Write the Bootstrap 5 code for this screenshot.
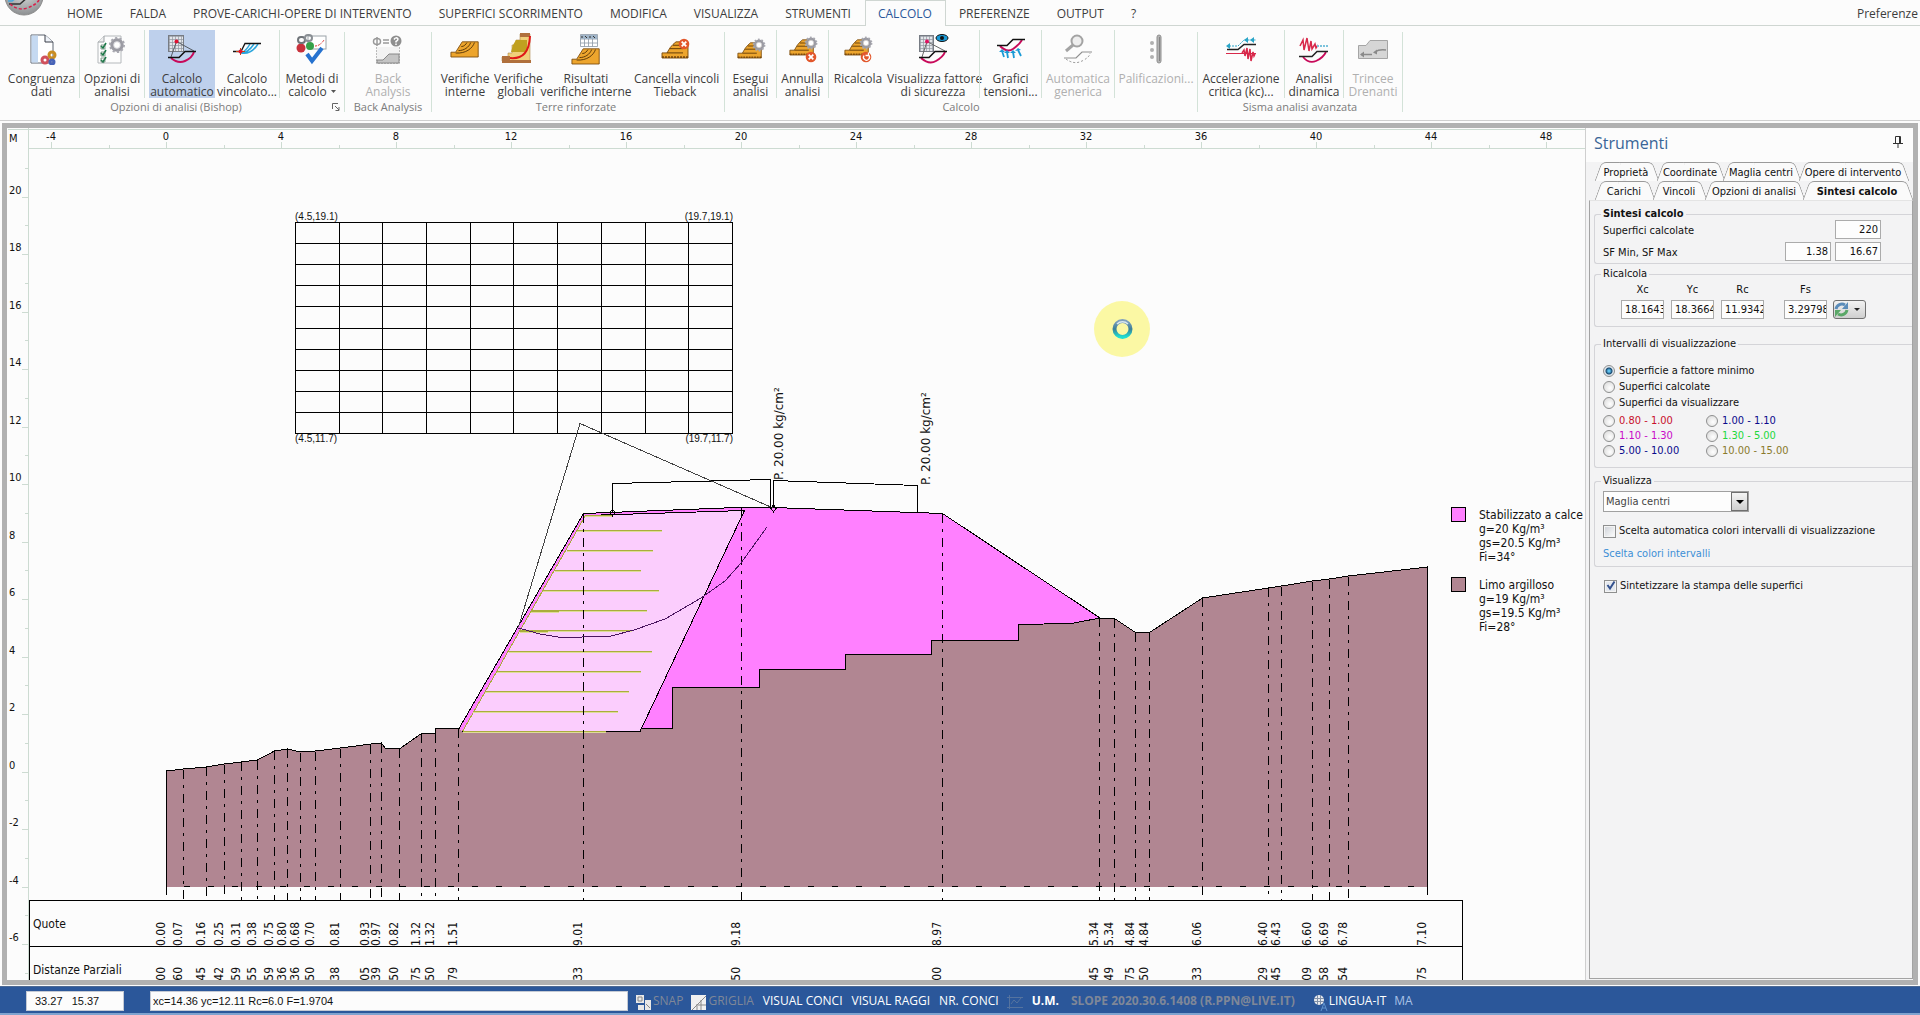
<!DOCTYPE html>
<html lang="it">
<head>
<meta charset="utf-8">
<meta name="viewport" content="width=device-width, initial-scale=1">
<title>Slope - Calcolo</title>
<link rel="stylesheet" href="https://cdn.jsdelivr.net/npm/bootstrap@5.3.0/dist/css/bootstrap.min.css">
<style>
:root{--ui:"Open Sans","Noto Sans",sans-serif;--form:"DejaVu Sans Condensed","DejaVu Sans",sans-serif}
body{font-family:var(--ui);font-size:12px;line-height:14px;color:#3c3c3c;background:#fcfcfc}
button{font-family:inherit}
/* menu tabs */
.menubar{height:26px;padding-left:54px;border-bottom:1px solid #cfd6d2}
.menutab{height:26px;padding:0 13px 0 12px;border:1px solid transparent;border-bottom:0;background:none;color:#3c3c3c;font-size:12px;line-height:24px;white-space:nowrap}
.menutab.current{background:#fcfcfc;border-color:#cfd6d2;color:#2b579a}
.menutab.corner{padding:0 1px}
.logo-orb{left:4px;top:0}
/* ribbon */
.ribbon{height:95px;border-bottom:1px solid #cfcfcf}
.rgroup{border-right:1px solid #d3e2d8;height:80px;margin-top:6px}
.rtools{height:68px;margin-top:-2px}
.rbtn{border:0;background:none;color:#3c3c3c;padding:2px 0 0;font-size:12px;line-height:13px;white-space:nowrap}
.rbtn:disabled{color:#b0b0b0}
.rbtn.on{background:#bed0ec}
.rbtn svg{display:block;width:32px;height:32px;margin:0 auto 7px}
.rbtn svg.caret{display:inline-block;width:5px;height:8px;margin:0 0 0 4px;vertical-align:middle}
.rsep{width:1px;background:#d3e2d8}
.rlabel{font-size:11px;line-height:12px;color:#7b7b7b;padding-top:3px}
.w44{width:44px}.w51{width:51px}.w58{width:58px}.w61{width:61px}.w64{width:64px}.w66{width:66px}.w72{width:72px}.w75{width:75px}.w82{width:82px}.w86{width:86px}.w92{width:92px}.w96{width:96px}
/* work area */
.workframe{border:5px solid #b1b1b1;margin:2px 2px 0 2px;background:#fcfcfc}
.plot{font-family:var(--form);font-size:12px}
.plot text{fill:#111}
.plot .rule{font-size:11px}
.plot .load{font-family:"DejaVu Sans",sans-serif}
.plot .tiny{font-size:10px;font-family:"Liberation Sans",sans-serif}
.tick{stroke:#cddbd2;stroke-width:1;shape-rendering:crispEdges}
.crisp{shape-rendering:crispEdges}
.ink{stroke:#000;stroke-width:1;fill:none;shape-rendering:crispEdges}
.ink.radius{stroke:#444}
.ink.slip{stroke:#4a1560}
/* side panel */
.side{width:328px;border-left:1px solid #cfcfcf;font-family:var(--form);font-size:11px;line-height:14px;color:#111}
.side-title{font-family:var(--ui);font-size:16px;line-height:30px;height:34px;color:#3a6597;padding:0 10px 0 8px}
.side-body{background:#f3f3f4}
.tabrow{height:19px;padding-left:9px}
.ptab{position:relative;flex:none;border:0;background:none;padding:2px 0 0;height:19px;font-size:11px;line-height:15px;color:#111;white-space:nowrap;z-index:0}
.ptab::before,.ptab::after{content:"";position:absolute;z-index:-1;top:0;bottom:0;border-top:1px solid #9a9a9a;background:#fafafa}
.ptab::before{left:3px;right:50%;border-left:1px solid #9a9a9a;border-radius:5px 0 0 0;transform:skewX(-20deg)}
.ptab::after{right:1px;left:45%;border-right:1px solid #9a9a9a;border-radius:0 5px 0 0;transform:skewX(20deg)}
.ptab.current{font-weight:700}
.pw52{width:52px}.pw58{width:58px}.pw62{width:62px}.pw66{width:66px}.pw76{width:76px}.pw98{width:98px}.pw108{width:108px}
.side-page{border:1px solid #a3a3a3;border-top-color:#e4e4e4;margin:0 0 1px 3px;padding:7px 0 0 4px}
.fset{border:1px solid #d4d4d8;border-right:0;border-radius:3px 0 0 3px;position:relative;min-width:0;padding:0 31px 0 8px}
.fset legend{float:none;width:auto;font-size:11px;line-height:14px;margin:0 0 0 -2px;padding:0 2px}
.summary{padding-bottom:2px}
.summary legend{line-height:12px}
.summary-gap{margin-top:3px}
.calc{margin-top:3px;padding-bottom:7px}
.calc legend{margin-bottom:2px}
.calc label{text-align:center;margin-left:7px}
.calc label:first-child{margin-left:18px}
.calc label:last-of-type{margin-left:20px}
.calc .fld{margin-top:3px;padding-right:0}
.refresh{width:33px;height:19px;margin-left:6px;border:1px solid #707070;border-radius:3px;background:linear-gradient(#f2f2f2,#cfcfcf);padding:0}
.fld{height:19px;border:1px solid #ababab;background:#fdfdfd;font-size:11px;line-height:15px;padding:1px 2px 1px 3px;color:#111;border-radius:0}
.fw46{width:46px}.fw43{width:43px}
.radios{margin-top:10px;padding-bottom:9px}
.radios legend{margin-bottom:12px}
.radios label{height:16px}
.pairs{grid-template-columns:103px 1fr;margin-top:2px}
.pairs label{height:15px;white-space:nowrap}
.view{margin-top:6px;padding-bottom:5px}
.view legend{margin-bottom:3px}
.auto-col{margin-top:12px;margin-bottom:9px}
.print{margin:12px 0 0 10px}
.opt{appearance:none;width:12px;height:12px;border:1px solid #8e8f8f;border-radius:50%;background:radial-gradient(circle at 60% 60%,#fff,#d5d5d5);margin:0 4px 0 0;flex:none}
.opt:checked{background:radial-gradient(circle,#5fc1ee 0 1px,#17486f 3px,#dfe6ec 4px)}
.tick-box{appearance:none;width:13px;height:13px;border:1px solid #8e8f8f;background:linear-gradient(135deg,#ccd0d6,#fff);box-shadow:inset 0 0 0 1px #f4f4f4;margin:0 3px 0 0;flex:none}
.tick-box:checked{background:#e4e8ee}
.print svg{left:2px;top:1px;pointer-events:none}
.pick{appearance:none;width:146px;height:21px;border:1px solid #a0a0a0;border-radius:0;background:#fdfdfd;color:#444;font-size:11px;padding:0 20px 0 2px}
.pick-arrow{right:1px;top:1px;width:17px;height:19px;border:1px solid #6f6f6f;background:linear-gradient(#f4f4f4,#cfcfcf);pointer-events:none}
.pick-arrow::after{content:"";position:absolute;left:4px;top:7px;border:4px solid transparent;border-top-color:#000;border-bottom:0}
.c-red{color:#c8102c}.c-mag{color:#c80ac8}.c-navy{color:#0a0a8c}.c-lime{color:#22d83c}.c-olive{color:#8a7a2c}.c-link{color:#3d8fd6}
/* status */
.statusbar{height:27px;margin-top:1px;background:#2b579a;border-top:1px solid #4d6a94;color:#fff;font-size:12px;line-height:20px}
.statusbar input{height:20px;border:1px solid #c4cad4;background:#fcfcfc;color:#111;font:11px/18px "Liberation Sans",sans-serif}
.statusbar button{border:0;background:none;color:#fff;padding:0;font-size:12px;line-height:20px;white-space:nowrap}
.statusbar .off{color:#7f8798}
.statusbar .off svg{margin-right:2px}
.statusbar .st-item{margin-left:9px}
.statusbar .st-lang{margin-left:18px}
.st-kbd{color:#a9c2e6}
.st-pos{width:98px;margin-left:26px;padding:0 8px}
.st-info{width:478px;margin-left:26px;padding:0 2px}
.under{height:2px;background:#7fa3cf}
</style>
<script src="https://cdn.jsdelivr.net/npm/bootstrap@5.3.0/dist/js/bootstrap.bundle.min.js"></script>
</head>
<body class="vh-100 d-flex flex-column overflow-hidden">

<svg width="0" height="0" class="position-absolute" aria-hidden="true">
 <defs>
  <pattern id="mesh" width="3" height="3" patternUnits="userSpaceOnUse"><rect width="3" height="3" fill="#e3e6ea"/><path d="M0 .5H3M.5 0V3" stroke="#9298a0" stroke-width=".7"/></pattern>
  <g id="gear"><circle r="5" fill="none" stroke="#9b9ba3" stroke-width="3.5"/><circle r="7" fill="none" stroke="#a8a8b0" stroke-width="2" stroke-dasharray="2.2 2.2"/><circle r="3.4" fill="#fff" stroke="#c9c9cf" stroke-width=".8"/></g>
  <g id="slab"><path d="M1 14H6L13 1H30V20H1Z" fill="#eda52d" stroke="#7a4a0c" stroke-width="1"/><path d="M9 12C15 12 20 8 22 2M6 15C17 16 24 9 26 2M12 7C15 7 17 4 18 2" fill="none" stroke="#4a2c05" stroke-width="1"/></g>
  <g id="stack"><path d="M1 14H6L9 8 12 4 15 1H27V20H1Z" fill="#eda52d" stroke="#7a4a0c"/><path d="M6 14H22M9 9H22L25 4M12 5H24" fill="none" stroke="#5a3606"/><path d="M1 19H27" stroke="#7a4a0c" stroke-width="2" stroke-dasharray="2 1"/></g>
  <g id="xdot"><circle r="5.3" fill="#e2572b"/><path d="M-2.3-2.3 2.3 2.3M2.3-2.3-2.3 2.3" stroke="#fff" stroke-width="1.8"/></g>
 </defs>
 <symbol id="i-congr" viewBox="0 0 32 32"><path d="M5 2H19L27 9V30H5Z" fill="#fff" stroke="#5d6470"/><path d="M5.500 2.500H12V29.500H5.500Z" fill="#c5d9f1"/><path d="M19 2V9H27" fill="#eef2f8" stroke="#3a3f48"/><circle cx="19" cy="27" r="3" fill="none" stroke="#d0505c" stroke-width="3"/><circle cx="26" cy="22" r="3" fill="none" stroke="#c98d22" stroke-width="3"/><circle cx="26" cy="29" r="2" fill="none" stroke="#4763b8" stroke-width="3"/></symbol>
 <symbol id="i-opz" viewBox="0 0 32 32"><path d="M8 3H25V30H2V9Z" fill="#fdfdfd" stroke="#b4b8bb"/><path d="M2 9H8V3" fill="#eee" stroke="#9ba0a4"/><path d="M5 13l2 2 3-5M5 20l2 2 3-5M5 27l2 2 3-5" fill="none" stroke="#157a45" stroke-width="1.600"/><path d="M5 12h4v4h-4zM5 19h4v4h-4zM5 25h4v4h-4z" fill="none" stroke="#557a66" stroke-width=".7"/><use href="#gear" x="21" y="12"/></symbol>
 <symbol id="i-auto" viewBox="0 0 32 32"><rect x="2.500" y="2.500" width="15" height="16" fill="url(#mesh)" stroke="#777c84"/><path d="M10.500 8.500 5 24M10.500 8.500 28 18" stroke="#555b63"/><circle cx="10.500" cy="8.500" r="2" fill="#e01030"/><path d="M5 25Q12 31 19 28T28 19" fill="none" stroke="#c80a5a" stroke-width="2"/><path d="M2 24.500H13L19 18.500H30" fill="none" stroke="#111" stroke-width="1.500"/></symbol>
 <symbol id="i-vinc" viewBox="0 0 32 32"><path d="M10 20Q20 22 27 11M10 20Q17 20 23 11M10 20Q15 18 19 11" fill="none" stroke="#2aa5dc" stroke-width="1.500"/><path d="M2 18.500H10L14 10.500H30" fill="none" stroke="#111" stroke-width="1.300"/><path d="M9.500 15V22M5 18.500H14" stroke="#c41"/><circle cx="9.500" cy="18.500" r="2" fill="#e01030"/></symbol>
 <symbol id="i-met" viewBox="0 0 32 32"><rect x="12" y="3" width="18" height="13" fill="#fff" stroke="#9aa2a8"/><path d="M19 13Q24 13 28 7" fill="none" stroke="#d33" stroke-dasharray="2 1"/><circle cx="5" cy="15" r="4.500" fill="#c8323c"/><circle cx="14" cy="13" r="4" fill="#36a048"/><rect x="2" y="4" width="7" height="6" rx="3" fill="none" stroke="#6f7479" stroke-width="2"/><rect x="9" y="2" width="7" height="6" rx="3" fill="none" stroke="#8a8f94" stroke-width="2"/><path d="M11 21l5 7L26 15" fill="none" stroke="#2672cf" stroke-width="4"/></symbol>
 <symbol id="i-back" viewBox="0 0 32 32"><path d="M4.500 14V30.500H27.500V14" fill="#f3f3f3" stroke="#bbb" stroke-dasharray="2 1"/><path d="M5 27H11L17 21H27V30H5Z" fill="#c5c5c5" stroke="#888"/><ellipse cx="5" cy="8.500" rx="3.500" ry="3" fill="none" stroke="#999" stroke-width="1.500"/><path d="M5 4V13M11 7H17M11 10H17" stroke="#999" stroke-width="1.500"/><circle cx="24" cy="8" r="5.500" fill="#8f8f8f"/><path d="M22 6.500Q24 3.500 26 6 26 7.500 24 8.500V9.500M24 10.500V12" fill="none" stroke="#fff" stroke-width="1.500"/></symbol>
 <symbol id="i-vint" viewBox="0 0 32 32"><g transform="translate(1 8) scale(.94 .8)"><use href="#slab"/></g></symbol>
 <symbol id="i-vglob" viewBox="0 0 32 32"><path d="M2 24H8V20H12V12H16V7H20V1H30V28H2Z" fill="#f0cf7a" stroke="#b08c50" stroke-width=".6"/><path d="M20 0H30V4H20ZM2 23H10V28H2ZM2 27H31V30H2Z" fill="#b0703c"/><path d="M16 7H27V19H11L13 12Z" fill="#c0a020"/><path d="M10 25Q29 27 30 3" fill="none" stroke="#e01818" stroke-width="2"/></symbol>
 <symbol id="i-ris" viewBox="0 0 32 32"><path d="M10.500 1.500H27.500V13.500H10.500ZM10.500 6H27.500M10.500 10H27.500M14.500 6V13.500M18.500 6V13.500M22.500 6V13.500" fill="#fff" stroke="#8a97a5" stroke-width=".8"/><path d="M11 2H27V6H11Z" fill="#9fb4c8"/><path d="M12 3v2M15 3l2 2M20 3v2M23 3l2 2" stroke="#333"/><g transform="translate(1 15) scale(.94 .8)"><use href="#slab"/></g></symbol>
 <symbol id="i-canc" viewBox="0 0 32 32"><g transform="translate(2 8) scale(1 .85)"><use href="#stack"/></g><use href="#xdot" x="25" y="11"/></symbol>
 <symbol id="i-eseg" viewBox="0 0 32 32"><g transform="translate(2 9) scale(.9 .8)"><use href="#stack"/></g><g transform="translate(24 12) scale(.8)"><use href="#gear"/></g></symbol>
 <symbol id="i-ann" viewBox="0 0 32 32"><g transform="translate(2 6) scale(.9 .8)"><use href="#stack"/></g><g transform="translate(24 10) scale(.8)"><use href="#gear"/></g><use href="#xdot" x="24" y="24"/></symbol>
 <symbol id="i-ric" viewBox="0 0 32 32"><g transform="translate(2 6) scale(.9 .8)"><use href="#stack"/></g><g transform="translate(24 10) scale(.8)"><use href="#gear"/></g><circle cx="24" cy="24" r="5.300" fill="#e2572b"/><path d="M26.500 22A3 3 0 1 1 22 22.500M26.500 19.500V22.500H23.500" fill="none" stroke="#fff" stroke-width="1.300"/></symbol>
 <symbol id="i-fatt" viewBox="0 0 32 32"><rect x="2.500" y="2.500" width="14" height="16" fill="url(#mesh)" stroke="#777c84"/><path d="M10 8.500 5 24M10 8.500 28 18" stroke="#666"/><circle cx="10" cy="8.500" r="2" fill="#e01060"/><path d="M4 25Q12 32 19 28T28 19" fill="none" stroke="#c80a5a" stroke-width="2"/><path d="M2 24.500H12L18 18.500H30" fill="none" stroke="#111" stroke-width="1.500"/><ellipse cx="25" cy="5" rx="6" ry="3.500" fill="#1a9ad6" stroke="#111"/><circle cx="25" cy="5" r="2" fill="#111"/></symbol>
 <symbol id="i-graf" viewBox="0 0 32 32"><path d="M5 13Q12 20 18 16T27 7" fill="none" stroke="#c80a5a" stroke-width="2"/><path d="M2 12.500H12L18 6.500H30" fill="none" stroke="#111" stroke-width="1.500"/><path d="M9 24 7 18M13 25 12 19M19 25 18 19M26 23 23 17" stroke="#1a9ad6" stroke-width="1.800"/><path d="M4 19l3-3 3 3zM9 20l3-3 3 3zM15 20l3-3 3 3zM20 18l3-3 3 2z" fill="#1a9ad6"/></symbol>
 <symbol id="i-autog" viewBox="0 0 32 32"><circle cx="15" cy="8" r="5.500" fill="#eee" stroke="#a3a3a3" stroke-width="2"/><path d="M11 12 4 18" stroke="#a3a3a3" stroke-width="3"/><path d="M2 25H14L20 19H30" fill="none" stroke="#8f8f8f" stroke-width="1.200"/><path d="M4 26Q12 32 20 28T28 20" fill="none" stroke="#8f8f8f" stroke-dasharray="2 2"/></symbol>
 <symbol id="i-pal" viewBox="0 0 32 32"><rect x="17" y="2" width="4" height="28" rx="2" fill="#b4b4b4" stroke="#909090"/><path d="M19.500 4V28" stroke="#858585"/><circle cx="12" cy="10" r="2" fill="#b0b0b0"/><circle cx="12" cy="17" r="2" fill="#b0b0b0"/><circle cx="12" cy="24" r="2" fill="#b0b0b0"/></symbol>
 <symbol id="i-acc" viewBox="0 0 32 32"><path d="M2 16.500H13L19 11.500H31" fill="none" stroke="#222" stroke-width="1.500"/><path d="M4 13H13L19 7H31" fill="none" stroke="#2aa5c8" stroke-dasharray="2 1"/><path d="M5 10v6l-4-3zM23 4v6l-4-3zM29 4v6l-4-3z" fill="#2aa5c8"/><path d="M1 20.500H31" stroke="#d8284a"/><path d="M17 20l2-3 1 6 2-8 1 11 2-10 1 12 2-9 1 4 1-2" fill="none" stroke="#d8284a" stroke-width="1.500"/></symbol>
 <symbol id="i-din" viewBox="0 0 32 32"><path d="M2 13 5 7 6 17 9 5 11 18 13 8 14 16 17 11 18 15 20 12" fill="none" stroke="#d8284a" stroke-width="1.500"/><path d="M19 13H30" stroke="#7cc3dc" stroke-width="2" stroke-dasharray="2 1"/><path d="M5 24Q11 31 18 28T28 19" fill="none" stroke="#c80a5a" stroke-width="1.800"/><path d="M1 23.500H14L19 18.500H30" fill="none" stroke="#222" stroke-width="1.500"/></symbol>
 <symbol id="i-trin" viewBox="0 0 32 32"><path d="M1.500 12.500H9L13 7.500H30.500V25.500H1.500Z" fill="#d6d6d6" stroke="#a5a5a5"/><path d="M4 21.500H15M18 19Q22 16 29 17" stroke="#8a8a8a" fill="none" stroke-width="1.300"/><path d="M3 21.500l4-3v6zM16 19.500l4-3v5z" fill="#8a8a8a"/></symbol>
</svg>

<header>
 <nav class="menubar d-flex position-relative" aria-label="Menu">
  <svg class="logo-orb position-absolute" width="40" height="17" aria-hidden="true"><defs><radialGradient id="orb" cx=".5" cy=".3" r=".7"><stop offset="0" stop-color="#eceded"/><stop offset="1" stop-color="#8d9092"/></radialGradient></defs><circle cx="20" cy="-4" r="19" fill="url(#orb)" stroke="#8b8b8b"/><path d="M5 4H16L24-3" fill="none" stroke="#333" stroke-width="1.500"/><path d="M6 4Q14 11 23 8T35 0" fill="none" stroke="#d8204a" stroke-width="1.500" stroke-dasharray="3 2"/><path d="M4 1H8L12-2" stroke="#48a8dc" stroke-width="1.500" fill="none"/></svg>
  <button class="menutab">HOME</button><button class="menutab">FALDA</button><button class="menutab">PROVE-CARICHI-OPERE DI INTERVENTO</button><button class="menutab">SUPERFICI SCORRIMENTO</button><button class="menutab">MODIFICA</button><button class="menutab">VISUALIZZA</button><button class="menutab">STRUMENTI</button><button class="menutab current">CALCOLO</button><button class="menutab">PREFERENZE</button><button class="menutab">OUTPUT</button><button class="menutab">?</button>
  <button class="menutab corner ms-auto">Preferenze</button>
 </nav>

 <div class="ribbon d-flex" role="toolbar" aria-label="Calcolo">
  <section class="rgroup ps-1">
   <div class="rtools d-flex">
    <button class="rbtn w75"><svg><use href="#i-congr"/></svg>Congruenza<br>dati</button><span class="rsep"></span>
    <button class="rbtn w64"><svg><use href="#i-opz"/></svg>Opzioni di<br>analisi</button><span class="rsep me-1"></span>
    <button class="rbtn w66 on"><svg><use href="#i-auto"/></svg>Calcolo<br>automatico</button>
    <button class="rbtn w64"><svg><use href="#i-vinc"/></svg>Calcolo<br>vincolato...</button><span class="rsep"></span>
    <button class="rbtn w64"><svg><use href="#i-met"/></svg>Metodi di<br>calcolo<svg class="caret" viewBox="0 0 5 8"><path d="M0 2H5L2.500 5Z" fill="#555"/></svg></button>
   </div>
   <div class="rlabel d-flex align-items-center ps-3"><span class="flex-grow-1 text-center">Opzioni di analisi (Bishop)</span><svg class="me-1" width="8" height="8" aria-hidden="true"><path d="M.5 6V.5H6M3 3l4 4M7 4V7.500H3.500" fill="none" stroke="#666"/></svg></div>
  </section>
  <section class="rgroup">
   <div class="rtools d-flex"><button class="rbtn w86" disabled><svg><use href="#i-back"/></svg>Back<br>Analysis</button></div>
   <div class="rlabel text-center">Back Analysis</div>
  </section>
  <section class="rgroup ps-1 pe-2">
   <div class="rtools d-flex">
    <button class="rbtn w58"><svg><use href="#i-vint"/></svg>Verifiche<br>interne</button>
    <button class="rbtn w44"><svg><use href="#i-vglob"/></svg>Verifiche<br>globali</button>
    <button class="rbtn w96"><svg><use href="#i-ris"/></svg>Risultati<br>verifiche interne</button>
    <button class="rbtn w82"><svg><use href="#i-canc"/></svg>Cancella vincoli<br>Tieback</button>
   </div>
   <div class="rlabel text-center">Terre rinforzate</div>
  </section>
  <section class="rgroup">
   <div class="rtools d-flex">
    <button class="rbtn w51"><svg><use href="#i-eseg"/></svg>Esegui<br>analisi</button><span class="rsep"></span>
    <button class="rbtn w51"><svg><use href="#i-ann"/></svg>Annulla<br>analisi</button><span class="rsep"></span>
    <button class="rbtn w58"><svg><use href="#i-ric"/></svg>Ricalcola<br>&nbsp;</button>
    <button class="rbtn w92"><svg><use href="#i-fatt"/></svg>Visualizza fattore<br>di sicurezza</button><span class="rsep"></span>
    <button class="rbtn w61"><svg><use href="#i-graf"/></svg>Grafici<br>tensioni...</button><span class="rsep"></span>
    <button class="rbtn w72" disabled><svg><use href="#i-autog"/></svg>Automatica<br>generica</button><span class="rsep"></span>
    <button class="rbtn w82" disabled><svg><use href="#i-pal"/></svg>Palificazioni...<br>&nbsp;</button>
   </div>
   <div class="rlabel text-center">Calcolo</div>
  </section>
  <section class="rgroup">
   <div class="rtools d-flex">
    <button class="rbtn w86"><svg><use href="#i-acc"/></svg>Accelerazione<br>critica (kc)...</button><span class="rsep"></span>
    <button class="rbtn w58"><svg><use href="#i-din"/></svg>Analisi<br>dinamica</button><span class="rsep"></span>
    <button class="rbtn w58" disabled><svg><use href="#i-trin"/></svg>Trincee<br>Drenanti</button>
   </div>
   <div class="rlabel text-center">Sisma analisi avanzata</div>
  </section>
 </div>
</header>

<main class="workframe d-flex flex-grow-1">
 <section class="flex-grow-1 overflow-hidden" aria-label="Sezione">
  <svg class="plot d-block w-100 h-100" role="img" aria-label="Sezione del pendio">
   <g transform="translate(-7 -128)">
    <g id="rulers"></g>
    <!-- ground -->
    <path class="crisp" fill="#b18692" d="M166.500 771 183.500 769 206.500 767 224.500 764 241.500 762 257.500 760 274.500 751 287.500 749 300.500 752 315.500 751 340.500 748 371 744 381.500 743 385.500 748H400L421.500 733H435.500V728.500H672.500V687.500H759.500V669.500H845.500V654.500H931.500V640.500H1018.500V624.500L1044 624 1074 623 1100 618 1114.500 618.500 1135.500 632.500H1149.500L1202.500 598 1268.500 588 1281.500 586 1312.500 581 1329.500 579 1348.500 576 1427.500 567V886.500H166.500Z"/>
    <path class="crisp" fill="#ff80ff" d="M459 728.500 583.500 513.500 737 507 773 507.500 942.500 513.500 1100 618 1074 623 1044 624 1018.500 624.500V640.500H931.500V654.500H845.500V669.500H759.500V687.500H672.500V728.500H642L640 731.500H462Z"/>
    <path class="crisp" fill="#fbcdfd" stroke="#000" d="M462.500 731.500 585.500 515.500 744.500 510.500 640 731.500Z"/>
    <path class="ink" d="M166.500 886V771L183.500 769 206.500 767 224.500 764 241.500 762 257.500 760 274.500 751 287.500 749 300.500 752 315.500 751 340.500 748 371 744 381.500 743 385.500 748.500H400L421.500 733.500H435.500V728.500H459L583.500 513.500 737 507.500 773 507.500 942.500 513.500 1100 618 1114.500 618.500 1135.500 632.500H1149.500L1202.500 598 1268.500 588 1281.500 586 1312.500 581 1329.500 579 1348.500 576 1427.500 567V886"/>
    <path class="ink" d="M642 728.500H672.500V687.500H759.500V669.500H845.500V654.500H931.500V640.500H1018.500V624.500L1044 624 1074 623 1100 618"/>
    <path class="ink" d="M166 886.500H1427" stroke-dasharray="6 18" stroke-dashoffset="6"/>
    <path class="crisp" stroke="#a9ad3c" fill="none" d="M462.500 731.500 585.500 515.500"/>
    <g id="geogrids" class="crisp"></g>
    <g id="verticals"></g>
    <g id="centres" class="ink"></g>
    <g class="tiny"><text x="295" y="220">(4.5,19.1)</text><text x="733" y="220" text-anchor="end">(19.7,19.1)</text><text x="295" y="442">(4.5,11.7)</text><text x="733" y="442" text-anchor="end">(19.7,11.7)</text></g>
    <path class="ink radius" d="M518.500 627 580 423.500 773 508"/>
    <path class="ink slip" d="M518.500 628 540 634 558 637H582L611 636 634 630 665 619 701 598 725 581 741 563 767 527"/>
    <path class="ink" d="M612.500 512V483.500L770.500 479.500V508M773.500 508V480.500L917.500 485.500V512M612.500 509 615 512.500 612.500 516 610 512.500ZM773.500 504 776 508.500 773.500 512 771 508.500Z"/>
    <text class="load" transform="translate(783 480) rotate(-90)">P. 20.00 kg/cm²</text>
    <text class="load" transform="translate(930 485) rotate(-90)">P. 20.00 kg/cm²</text>
    <!-- table of heights -->
    <path class="ink" d="M29.500 985V900.500H1462.500V985M29.500 946.500H1462.500"/>
    <text x="33" y="928">Quote</text><text x="33" y="974">Distanze Parziali</text>
    <g id="heights"></g>
    <!-- key -->
    <rect class="crisp" x="1451.500" y="507.500" width="14" height="14" fill="#ff80ff" stroke="#000"/>
    <text x="1479" y="519">Stabilizzato a calce</text><text x="1479" y="533">g=20 Kg/m³</text><text x="1479" y="547">gs=20.5 Kg/m³</text><text x="1479" y="561">Fi=34°</text>
    <rect class="crisp" x="1451.500" y="577.500" width="14" height="14" fill="#b18692" stroke="#000"/>
    <text x="1479" y="589">Limo argilloso</text><text x="1479" y="603">g=19 Kg/m³</text><text x="1479" y="617">gs=19.5 Kg/m³</text><text x="1479" y="631">Fi=28°</text>
    <!-- busy pointer -->
    <defs><linearGradient id="ring" x1="0" y1="0" x2="0" y2="1"><stop offset="0" stop-color="#7fa0bd"/><stop offset=".5" stop-color="#3b7f98"/><stop offset="1" stop-color="#1fe0d2"/></linearGradient></defs>
    <circle cx="1122" cy="329" r="28" fill="#fbf8a4"/><circle cx="1122.500" cy="329" r="8" fill="none" stroke="url(#ring)" stroke-width="4"/><path d="M1117 324A8 8 0 0 1 1128 324" fill="none" stroke="#dbe8f0" stroke-width="1.500"/>
   </g>
  </svg>
 </section>

 <aside class="side d-flex flex-column flex-shrink-0">
  <div class="side-title d-flex justify-content-between"><span>Strumenti</span><svg class="mt-2" width="10" height="14" aria-label="Blocca"><path d="M2.500 0.500H7.500V7M2.500 0.500V7M6.500 1V7M0 7.500H10M5 8V12" fill="none" stroke="#333"/></svg></div>
  <div class="side-body d-flex flex-column flex-grow-1">
   <div class="tabrow d-flex"><button class="ptab pw62">Proprietà</button><button class="ptab pw66">Coordinate</button><button class="ptab pw76">Maglia centri</button><button class="ptab pw108">Opere di intervento</button></div>
   <div class="tabrow d-flex"><button class="ptab pw58">Carichi</button><button class="ptab pw52">Vincoli</button><button class="ptab pw98">Opzioni di analisi</button><button class="ptab pw108 current">Sintesi calcolo</button></div>
   <div class="side-page flex-grow-1">
    <fieldset class="fset summary"><legend class="fw-bold">Sintesi calcolo</legend>
     <div class="d-flex justify-content-between"><label for="nsup" class="mt-1">Superfici calcolate</label><input id="nsup" class="fld fw46 text-end" value="220"></div>
     <div class="d-flex summary-gap"><label for="sfmin" class="me-auto pt-1">SF Min, SF Max</label><input id="sfmin" class="fld fw46 text-end me-1" value="1.38"><input id="sfmax" aria-label="SF Max" class="fld fw46 text-end" value="16.67"></div>
    </fieldset>
    <fieldset class="fset calc"><legend>Ricalcola</legend>
     <div class="d-flex align-items-end">
      <label>Xc<br><input class="fld fw43" value="18.1643"></label>
      <label>Yc<br><input class="fld fw43" value="18.3664"></label>
      <label>Rc<br><input class="fld fw43" value="11.9342"></label>
      <label>Fs<br><input class="fld fw43" value="3.29798"></label>
      <button class="refresh" aria-label="Ricalcola"><svg width="31" height="17" class="d-block"><path d="M2 8A6 6 0 0 1 11 4" fill="none" stroke="#5a8cba" stroke-width="3"/><path d="M14 1V8H8Z" fill="#5a8cba"/><path d="M13 9A6 6 0 0 1 4 13" fill="none" stroke="#5aa868" stroke-width="3"/><path d="M1 16V9H7Z" fill="#5aa868"/><path d="M20 7H26L23 10Z" fill="#222"/></svg></button>
     </div>
    </fieldset>
    <fieldset class="fset radios"><legend>Intervalli di visualizzazione</legend>
     <label class="d-flex align-items-center"><input type="radio" name="iv" class="opt" checked>Superficie a fattore minimo</label>
     <label class="d-flex align-items-center"><input type="radio" name="iv" class="opt">Superfici calcolate</label>
     <label class="d-flex align-items-center"><input type="radio" name="iv" class="opt">Superfici da visualizzare</label>
     <div class="d-grid pairs">
      <label class="d-flex align-items-center c-red"><input type="radio" name="iv" class="opt">0.80 - 1.00</label><label class="d-flex align-items-center c-navy"><input type="radio" name="iv" class="opt">1.00 - 1.10</label>
      <label class="d-flex align-items-center c-mag"><input type="radio" name="iv" class="opt">1.10 - 1.30</label><label class="d-flex align-items-center c-lime"><input type="radio" name="iv" class="opt">1.30 - 5.00</label>
      <label class="d-flex align-items-center c-navy"><input type="radio" name="iv" class="opt">5.00 - 10.00</label><label class="d-flex align-items-center c-olive"><input type="radio" name="iv" class="opt">10.00 - 15.00</label>
     </div>
    </fieldset>
    <fieldset class="fset view"><legend>Visualizza</legend>
     <div class="position-relative d-inline-block"><select class="pick d-block" aria-label="Visualizza"><option>Maglia centri</option></select><span class="pick-arrow position-absolute"></span></div>
     <label class="d-flex align-items-center auto-col text-nowrap"><input type="checkbox" class="tick-box">Scelta automatica colori intervalli di visualizzazione</label>
     <a href="#" class="c-link text-decoration-none d-block">Scelta colori intervalli</a>
    </fieldset>
    <label class="print d-flex align-items-center position-relative"><input type="checkbox" class="tick-box" checked>Sintetizzare la stampa delle superfici<svg class="position-absolute" width="10" height="11"><path d="M1.500 5 4 8.500 8.500 1.500" fill="none" stroke="#33518e" stroke-width="2"/></svg></label>
   </div>
  </div>
 </aside>
</main>

<footer class="statusbar d-flex align-items-start flex-shrink-0 pt-1">
 <input class="st-pos" aria-label="Coordinate cursore" value="33.27   15.37"><input class="st-info" aria-label="Centro" value="xc=14.36 yc=12.11 Rc=6.0 F=1.9704">
 <button class="off d-flex ms-2"><svg width="15" height="16" class="mt-1"><path d="M0 0H8V8H0ZM9 5H15V15H9ZM2 10H8V15H2Z" fill="#e8e8e8"/><path d="M2 2H6V6H2ZM10 9l4 4" stroke="#888" fill="none"/></svg>SNAP</button>
 <button class="off d-flex ms-2"><svg width="15" height="16" class="mt-1"><path d="M0 0H15V15H0Z" fill="#f0f0f0"/><path d="M1 15 15 1M5 10H15M10 5V15M6 11V15" stroke="#8a8a8a" fill="none"/></svg>GRIGLIA</button>
 <button class="st-item">VISUAL CONCI</button><button class="st-item">VISUAL RAGGI</button><button class="st-item">NR. CONCI</button>
 <svg width="16" height="14" class="ms-2 mt-1"><path d="M2.500 0V14M0 12.500H16M0 2.500H16M4 9 7 5 10 8 14 3" fill="none" stroke="#55739f"/></svg>
 <button class="st-item fw-bold">U.M.</button><span class="off fw-bold ms-2 ps-1">SLOPE 2020.30.6.1408 (R.PPN@LIVE.IT)</span>
 <button class="st-lang d-flex"><svg width="16" height="17" class="mt-1"><circle cx="6" cy="5" r="5" fill="#e6e9ee"/><path d="M1 3.500H11M1 6.500H11M4.500 0V10M7.500 0V10" stroke="#8090a8"/><path d="M8 16 11 8 14 16M9 13H13" stroke="#5f93cf" fill="none"/></svg>LINGUA-IT</button>
 <span class="st-kbd ms-2">MA</span>
</footer>
<div class="under flex-shrink-0"></div>

<script>
const X0=166.25, Y0=771.5, S=28.75;
const px=u=>Math.round(X0+S*u), py=u=>Math.round(Y0-S*u);
let s='<path class="tick" d="M28.500 128V980M28 148.500H1585M8 129.500H1585"/><text class="rule" x="9" y="142">M</text>';
for(let u=-4;u<=48;u+=2){
  s+=`<path class="tick" d="M${px(u)+.5} ${u%4?145:142}V148"/>`;
  if(u%4===0) s+=`<text class="rule" text-anchor="middle" x="${px(u)}" y="140">${u}</text>`;
}
for(let u=-7;u<=21;u++){
  s+=`<path class="tick" d="M${u%2?25:22} ${py(u)+.5}H28"/>`;
  if(u%2===0) s+=`<text class="rule" x="9" y="${py(u)-3}">${u}</text>`;
}
document.getElementById('rulers').innerHTML=s;
// grid of trial centres
s='';
for(let i=0;i<=10;i++){
  s+=`M${Math.floor(295.4+i*43.7)+.5} 222V434M295 ${Math.round(222+i*21.1)+.5}H733`;
}
document.getElementById('centres').innerHTML=`<path d="${s}"/>`;
// reinforcement layers: y, start, end
document.getElementById('geogrids').innerHTML=[[515,585,613],[530,577,662],[550,567,653],[570,555,641],[590,543,659],[610,531,647],[611,531,559],[630,520,632],[631,520,548],[651,509,652],[671,497,641],[691,485,629],[711,473,618],[731,463,606]].map(([y,a,b])=>`<path d="M${a} ${y+1.5}H${b}" stroke="#dfdc9a"/><path d="M${a} ${y+.5}H${b}" stroke="#a9ad3c"/>`).join('');
// profile vertices: x, top, height, distance
const P=[[166,886,'0.00','00'],[183,770,'0.07','60'],[206,767,'0.16','45'],[224,765,'0.25','42'],[241,762,'0.31','59'],[257,761,'0.38','55'],[274,751,'0.75','59'],[287,749,'0.80','36'],[300,753,'0.68','36'],[315,752,'0.70','50'],[340,749,'0.81','38'],[370,745,'0.93','05'],[381,744,'0.97','39'],[399,749,'0.82','50'],[421,734,'1.32','75'],[435,734,'1.32','50'],[458,729,'1.51','79'],[583,514,'9.01','33'],[741,508,'9.18','50'],[942,514,'8.97','00'],[1099,618,'5.34','45'],[1114,619,'5.34','49'],[1135,633,'4.84','75'],[1149,633,'4.84','50'],[1202,598,'6.06','33'],[1268,588,'6.40','29'],[1281,587,'6.43','45'],[1312,582,'6.60','09'],[1329,580,'6.69','58'],[1348,577,'6.78','54'],[1427,886,'7.10','75']];
document.getElementById('verticals').innerHTML=P.map(p=>`<path class="ink" stroke-dasharray="9 6 3 6" d="M${p[0]+.5} ${p[1]}V900"/>`).join('');
document.getElementById('heights').innerHTML=P.map(p=>`<text transform="translate(${p[0]-1} 946) rotate(-90)">${p[2]}</text><text text-anchor="end" transform="translate(${p[0]-1} 967) rotate(-90)">${p[3]}</text>`).join('');
</script>
</body>
</html>
